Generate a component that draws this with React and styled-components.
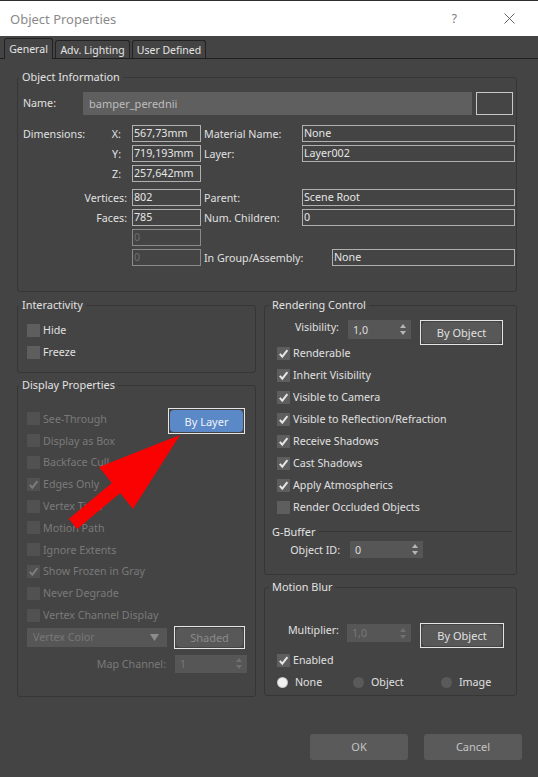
import styled, { createGlobalStyle } from "styled-components";

const GlobalStyle = createGlobalStyle`
  html, body {
    margin: 0;
    background: #444;
  }
  body {
    font-family: "Noto Sans", "Open Sans", sans-serif;
    font-size: 10.7px;
    color: #e0e0e0;
  }
`;

const Window = styled.div`
  position: relative;
  width: 538px;
  height: 777px;
  overflow: hidden;
  background: #444;
`;

const TitleBar = styled.div`
  height: 36px;
  box-sizing: border-box;
  background: #fff;
  border-top: 1px solid #2e2e2e;
  display: flex;
  align-items: center;
  padding-left: 10px;
`;

const Title = styled.div`
  flex: 1;
  font-size: 13px;
  color: #8a8a8a;
`;

const HelpMark = styled.span`
  font-size: 12px;
  color: #7a7a7a;
  margin-right: 47px;
`;

const CloseIcon = styled.svg`
  margin-right: 23px;
`;

const TabStrip = styled.div`
  height: 23px;
  box-sizing: border-box;
  display: flex;
  align-items: flex-end;
  gap: 2px;
  padding-left: 4px;
  border-bottom: 1px solid #1f1f1f;
`;

const Tab = styled.div`
  box-sizing: border-box;
  width: ${(p) => p.$w}px;
  height: ${(p) => (p.$active ? 21 : 18)}px;
  margin-bottom: ${(p) => (p.$active ? -1 : 0)}px;
  border: 1px solid #222;
  border-bottom: none;
  border-radius: 3px 3px 0 0;
  background: #444;
  display: flex;
  align-items: center;
  justify-content: center;
  font-size: 10.5px;
  color: #e4e4e4;
  white-space: nowrap;
  position: relative;
`;

const Body = styled.div`
  padding: 10px 21px 0 17px;
`;

const Group = styled.fieldset`
  margin: ${(p) => p.$mt || 0}px 0 0;
  padding: 0;
  border: 1px solid #363636;
  border-radius: 3px;
  min-width: 0;
  box-sizing: border-box;
`;

const Legend = styled.legend`
  padding: 0 3px;
  margin-left: ${(p) => p.$ml ?? 1}px;
  line-height: 16px;
  font-size: 10.9px;
  color: #e2e2e2;
`;

const GroupBody = styled.div`
  padding: ${(p) => p.$pad};
`;

/* ---------- object information ---------- */

const NameRow = styled.div`
  display: flex;
  align-items: center;
  margin-top: 6px;
`;

const NameLabel = styled.div`
  width: 60px;
`;

const NameField = styled.div`
  width: 389px;
  height: 23px;
  background: #5f5f5f;
  color: #bdbdbd;
  font-size: 11px;
  line-height: 23px;
  padding-left: 6px;
  box-sizing: border-box;
`;

const Swatch = styled.div`
  width: 37px;
  height: 23px;
  margin: 1px 0 0 4px;
  box-sizing: border-box;
  border: 1px solid #c8c8c8;
  background: #454545;
`;

const InfoRow = styled.div`
  display: flex;
  align-items: center;
  height: 17px;
  margin-top: ${(p) => p.$mt ?? 3}px;
`;

const LeftCell = styled.div`
  width: 104px;
  flex: none;
  display: flex;
  justify-content: space-between;
  padding-right: ${(p) => p.$pr ?? 0}px;
  box-sizing: border-box;
  margin-right: 5px;
`;

const SideLabel = styled.div`
  width: ${(p) => p.$w}px;
  flex: none;
  padding-left: 3px;
  box-sizing: border-box;
`;

const Field = styled.div`
  box-sizing: border-box;
  width: ${(p) => p.$w}px;
  height: 17px;
  flex: none;
  border: 1px solid ${(p) => (p.$disabled ? "#8a8a8a" : "#b0b0b0")};
  color: ${(p) => (p.$disabled ? "#6e6e6e" : "#e6e6e6")};
  padding-left: 1px;
  line-height: 15px;
  white-space: nowrap;
  overflow: hidden;
`;

/* ---------- lower columns ---------- */

const Columns = styled.div`
  display: grid;
  grid-template-columns: 239px 253px;
  column-gap: 8px;
  margin-top: 5px;
`;

const Column = styled.div`
  display: flex;
  flex-direction: column;
`;

const CheckRow = styled.div`
  display: flex;
  align-items: center;
  height: ${(p) => p.$h || 22}px;
  color: ${(p) => (p.$disabled ? "#7a7a7a" : "#e0e0e0")};
  white-space: nowrap;
`;

const Box = styled.span`
  width: 13px;
  height: 13px;
  flex: none;
  margin-right: 3px;
  background: ${(p) => (p.$disabled ? "#515151" : "#5e5e5e")};
  display: flex;
  align-items: center;
  justify-content: center;
`;

const TopArea = styled.div`
  display: flex;
  align-items: flex-start;
`;

const CheckList = styled.div`
  flex: 1;
  min-width: 0;
`;

const OutlineButton = styled.div`
  box-sizing: border-box;
  width: ${(p) => p.$w}px;
  height: ${(p) => p.$h}px;
  flex: none;
  border: 1px solid #e4e4e4;
  padding: 1px;
  display: flex;
  margin: ${(p) => p.$m || 0};
`;

const ButtonFace = styled.div`
  flex: 1;
  border-radius: 4px;
  background: ${(p) => (p.$blue ? "#5b88c6" : "#585858")};
  color: ${(p) => (p.$blue ? "#eef3fb" : p.$disabled ? "#8a8a8a" : "#e0e0e0")};
  font-size: 11px;
  display: flex;
  align-items: center;
  justify-content: center;
`;

const ControlRow = styled.div`
  display: flex;
  align-items: ${(p) => p.$align || "center"};
  height: ${(p) => p.$h}px;
  margin-top: ${(p) => p.$mt || 0}px;
`;

const RightLabel = styled.div`
  width: ${(p) => p.$w}px;
  flex: none;
  text-align: right;
  margin-right: ${(p) => p.$gap}px;
  color: ${(p) => (p.$disabled ? "#7a7a7a" : "#e0e0e0")};
  white-space: nowrap;
`;

const SpinBox = styled.div`
  box-sizing: border-box;
  width: ${(p) => p.$w}px;
  height: ${(p) => p.$h}px;
  flex: none;
  margin: ${(p) => p.$m || 0};
  background: #565656;
  color: ${(p) => (p.$disabled ? "#777" : "#dcdcdc")};
  display: flex;
  align-items: center;
  justify-content: space-between;
  padding: 0 5px 0 5px;
`;

const Select = styled.div`
  box-sizing: border-box;
  width: 140px;
  height: 19px;
  flex: none;
  margin-right: 7px;
  background: #565656;
  color: #767676;
  display: flex;
  align-items: center;
  justify-content: space-between;
  padding: 0 8px 0 6px;
`;

const SubHeader = styled.div`
  display: flex;
  align-items: center;
  height: 22px;
  margin: 2px 0 0 -5px;
  color: #e2e2e2;
  font-size: 10.9px;

  &::after {
    content: "";
    flex: 1;
    height: 1px;
    margin-left: 4px;
    background: #363636;
  }
`;

const RadioRow = styled.div`
  display: grid;
  grid-template-columns: 76px 88px auto;
  height: 22px;
  align-items: center;
`;

const RadioItem = styled.div`
  display: flex;
  align-items: center;
  color: #e0e0e0;
`;

const Radio = styled.span`
  width: 11px;
  height: 11px;
  border-radius: 50%;
  margin-right: 7px;
  background: ${(p) =>
    p.$on ? "radial-gradient(circle, #f2f2f2 50%, #a0a0a0 80%)" : "#5a5a5a"};
`;

const Footer = styled.div`
  display: flex;
  justify-content: flex-end;
  gap: 16px;
  margin: 37px -5px 0 0;
`;

const DialogButton = styled.div`
  width: 98px;
  height: 26px;
  border-radius: 3px;
  background: #5a5a5a;
  color: #c4c4c4;
  font-size: 11px;
  display: flex;
  align-items: center;
  justify-content: center;
`;

const Overlay = styled.svg`
  position: absolute;
  left: 0;
  top: 0;
  pointer-events: none;
`;

const Check = ({ label, checked, disabled, h }) => (
  <CheckRow $disabled={disabled} $h={h}>
    <Box $disabled={disabled}>
      {checked && (
        <svg width="11" height="11" viewBox="0 0 11 11">
          <polyline
            points="1.8,5.8 4.3,8.6 9.4,2.2"
            fill="none"
            stroke={disabled ? "#7c7c7c" : "#e6e6e6"}
            strokeWidth="2"
          />
        </svg>
      )}
    </Box>
    {label}
  </CheckRow>
);

const Arrows = ({ disabled }) => (
  <svg width="6" height="11" viewBox="0 0 6 11">
    <polygon points="0,4 3,0 6,4" fill={disabled ? "#707070" : "#b5b5b5"} />
    <polygon points="0,7 3,11 6,7" fill={disabled ? "#707070" : "#b5b5b5"} />
  </svg>
);

const Spinner = ({ value, w, h, disabled, m }) => (
  <SpinBox $w={w} $h={h} $disabled={disabled} $m={m}>
    <span>{value}</span>
    <Arrows disabled={disabled} />
  </SpinBox>
);

const PushButton = ({ children, w, h, blue, disabled, m }) => (
  <OutlineButton $w={w} $h={h} $m={m}>
    <ButtonFace $blue={blue} $disabled={disabled}>
      {children}
    </ButtonFace>
  </OutlineButton>
);

const displayItems = [
  ["See-Through", false],
  ["Display as Box", false],
  ["Backface Cull", false],
  ["Edges Only", true],
  ["Vertex Ticks", false],
  ["Motion Path", false],
  ["Ignore Extents", false],
  ["Show Frozen in Gray", true],
  ["Never Degrade", false],
  ["Vertex Channel Display", false],
];

const renderItems = [
  ["Renderable", true],
  ["Inherit Visibility", true],
  ["Visible to Camera", true],
  ["Visible to Reflection/Refraction", true],
  ["Receive Shadows", true],
  ["Cast Shadows", true],
  ["Apply Atmospherics", true],
  ["Render Occluded Objects", false],
];

export default function App() {
  return (
    <>
      <GlobalStyle />
      <Window>
        <TitleBar>
          <Title>Object Properties</Title>
          <HelpMark>?</HelpMark>
          <CloseIcon width="11" height="11" viewBox="0 0 11 11">
            <path d="M0.5 0.5 L10.5 10.5 M10.5 0.5 L0.5 10.5" stroke="#666" strokeWidth="1" />
          </CloseIcon>
        </TitleBar>

        <TabStrip>
          <Tab $active $w={49}>General</Tab>
          <Tab $w={75}>Adv. Lighting</Tab>
          <Tab $w={74}>User Defined</Tab>
        </TabStrip>

        <Body>
          <Group>
            <Legend>Object Information</Legend>
            <GroupBody $pad="0 1px 25px 5px">
              <NameRow>
                <NameLabel>Name:</NameLabel>
                <NameField>bamper_perednii</NameField>
                <Swatch />
              </NameRow>

              <InfoRow $mt={10}>
                <LeftCell $pr={6}>
                  <span>Dimensions:</span>
                  <span>X:</span>
                </LeftCell>
                <Field $w={69}>567,73mm</Field>
                <SideLabel $w={101}>Material Name:</SideLabel>
                <Field $w={213}>None</Field>
              </InfoRow>
              <InfoRow>
                <LeftCell $pr={6}>
                  <span />
                  <span>Y:</span>
                </LeftCell>
                <Field $w={69}>719,193mm</Field>
                <SideLabel $w={101}>Layer:</SideLabel>
                <Field $w={213}>Layer002</Field>
              </InfoRow>
              <InfoRow>
                <LeftCell $pr={6}>
                  <span />
                  <span>Z:</span>
                </LeftCell>
                <Field $w={69}>257,642mm</Field>
              </InfoRow>
              <InfoRow $mt={7}>
                <LeftCell>
                  <span />
                  <span>Vertices:</span>
                </LeftCell>
                <Field $w={69}>802</Field>
                <SideLabel $w={101}>Parent:</SideLabel>
                <Field $w={213}>Scene Root</Field>
              </InfoRow>
              <InfoRow>
                <LeftCell>
                  <span />
                  <span>Faces:</span>
                </LeftCell>
                <Field $w={69}>785</Field>
                <SideLabel $w={101}>Num. Children:</SideLabel>
                <Field $w={213}>0</Field>
              </InfoRow>
              <InfoRow>
                <LeftCell />
                <Field $w={69} $disabled>
                  0
                </Field>
              </InfoRow>
              <InfoRow>
                <LeftCell />
                <Field $w={69} $disabled>
                  0
                </Field>
                <SideLabel $w={131}>In Group/Assembly:</SideLabel>
                <Field $w={183}>None</Field>
              </InfoRow>
            </GroupBody>
          </Group>

          <Columns>
            <Column>
              <Group>
                <Legend>Interactivity</Legend>
                <GroupBody $pad="6px 0 9px 9px">
                  <Check label="Hide" />
                  <Check label="Freeze" />
                </GroupBody>
              </Group>

              <Group $mt={4}>
                <Legend>Display Properties</Legend>
                <GroupBody $pad="15px 10px 23px 9px">
                  <TopArea>
                    <CheckList>
                      {displayItems.map(([label, on]) => (
                        <Check key={label} label={label} checked={on} disabled h={21.8} />
                      ))}
                    </CheckList>
                    <PushButton w={77} h={26} blue>
                      By Layer
                    </PushButton>
                  </TopArea>
                  <ControlRow $h={23}>
                    <Select>
                      <span>Vertex Color</span>
                      <svg width="9" height="7" viewBox="0 0 9 7">
                        <polygon points="0,0 9,0 4.5,7" fill="#8c8c8c" />
                      </svg>
                    </Select>
                    <PushButton w={71} h={23} disabled>
                      Shaded
                    </PushButton>
                  </ControlRow>
                  <ControlRow $h={18} $mt={6}>
                    <RightLabel $w={139} $gap={9} $disabled>
                      Map Channel:
                    </RightLabel>
                    <Spinner value="1" w={72} h={18} disabled />
                  </ControlRow>
                </GroupBody>
              </Group>
            </Column>

            <Column>
              <Group>
                <Legend $ml={4}>Rendering Control</Legend>
                <GroupBody $pad="7px 4px 16px 12px">
                  <ControlRow $h={22} $align="flex-start">
                    <RightLabel $w={62} $gap={9}>
                      Visibility:
                    </RightLabel>
                    <Spinner value="1,0" w={63} h={19} m="0 9px 0 0" />
                    <PushButton w={83} h={25} m="0 0 -3px 0">
                      By Object
                    </PushButton>
                  </ControlRow>
                  {renderItems.map(([label, on]) => (
                    <Check key={label} label={label} checked={on} />
                  ))}
                  <SubHeader>G-Buffer</SubHeader>
                  <ControlRow $h={17} $mt={-1}>
                    <RightLabel $w={63} $gap={10}>
                      Object ID:
                    </RightLabel>
                    <Spinner value="0" w={73} h={17} />
                  </ControlRow>
                </GroupBody>
              </Group>

              <Group $mt={4}>
                <Legend $ml={4}>Motion Blur</Legend>
                <GroupBody $pad="28px 4px 2px 12px">
                  <ControlRow $h={22} $align="flex-start">
                    <RightLabel $w={62} $gap={8}>
                      Multiplier:
                    </RightLabel>
                    <Spinner value="1,0" w={64} h={18} disabled m="1px 9px 0 0" />
                    <PushButton w={84} h={25} m="0 0 -3px 0">
                      By Object
                    </PushButton>
                  </ControlRow>
                  <ControlRow $h={4} />
                  <Check label="Enabled" checked />
                  <RadioRow>
                    <RadioItem>
                      <Radio $on />
                      None
                    </RadioItem>
                    <RadioItem>
                      <Radio />
                      Object
                    </RadioItem>
                    <RadioItem>
                      <Radio />
                      Image
                    </RadioItem>
                  </RadioRow>
                </GroupBody>
              </Group>
            </Column>
          </Columns>

          <Footer>
            <DialogButton>OK</DialogButton>
            <DialogButton>Cancel</DialogButton>
          </Footer>
        </Body>

        <Overlay width="538" height="777" viewBox="0 0 538 777">
          <polygon
            points="180,435 99,467 111.8,483 68.8,519 77.2,529 120.2,493 133,509"
            fill="#fb0202"
          />
        </Overlay>
      </Window>
    </>
  );
}
